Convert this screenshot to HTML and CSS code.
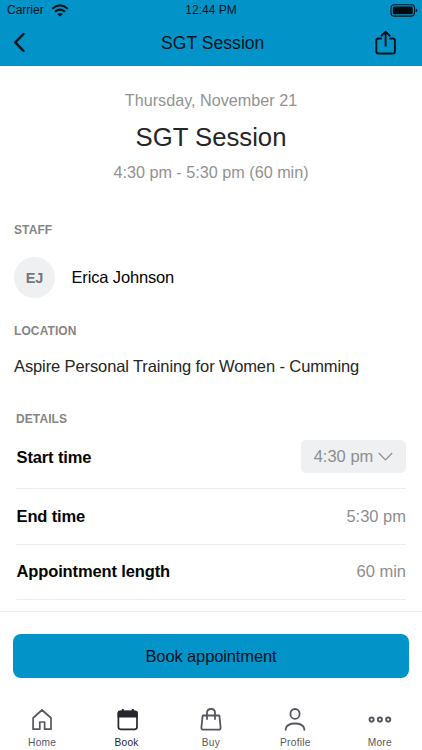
FILE: index.html
```html
<!DOCTYPE html>
<html lang="en">
<head>
<meta charset="utf-8">
<title>SGT Session</title>
<link rel="stylesheet" href="styles.css">
</head>
<body>
<div class="screen">
  <header class="header">
    <div class="status">
      <div class="carrier"><span>Carrier</span>
        <svg class="wifi" width="18" height="13" viewBox="0 0 18 13" fill="none" stroke="#00141c" stroke-width="2"><path d="M1.2 4.8Q9-2 16.8 4.8"/><path d="M4 7.8Q9 3.4 14 7.8"/><path d="M6.2 10Q9 7.8 11.8 10L9 12.6Z" fill="#00141c" stroke="none"/></svg>
      </div>
      <span class="clock">12:44 PM</span>
      <svg class="battery" width="28" height="13" viewBox="0 0 28 13"><rect x="1" y=".7" width="23.5" height="11.4" rx="3" fill="none" stroke="#00141c" stroke-width="1.1"/><rect x="2.8" y="2.5" width="19.9" height="7.8" rx="1.2" fill="#000a0f"/><path d="M25.8 4.5Q27.4 5 27.4 6.4T25.8 8.3Z" fill="#00141c"/></svg>
    </div>
    <nav class="navbar">
      <svg width="32" height="24" viewBox="0 0 32 24" fill="none" stroke="#00141c" stroke-width="2.4" stroke-linecap="round" stroke-linejoin="round"><path d="M23.5 3L15.2 11.4L23.5 19.8"/></svg>
      <span class="nav-title">SGT Session</span>
      <svg width="32" height="26" viewBox="0 0 32 26" fill="none" stroke="#00141c" stroke-width="1.9" stroke-linecap="round" stroke-linejoin="round"><path d="M11.2 8.5H8.4Q6.3 8.5 6.3 10.6V21.4Q6.3 23.5 8.4 23.5H22.8Q24.9 23.5 24.9 21.4V10.6Q24.9 8.5 22.8 8.5H20"/><path d="M15.6 15.7V2M11.5 5.7L15.6 1.7L19.7 5.7"/></svg>
    </nav>
  </header>
  <main class="content">
    <section class="summary">
      <p class="date">Thursday, November 21</p>
      <h1>SGT Session</h1>
      <p class="time">4:30 pm - 5:30 pm (60 min)</p>
    </section>
    <section class="staff">
      <h2>STAFF</h2>
      <div class="person"><span class="avatar">EJ</span><span class="name">Erica Johnson</span></div>
    </section>
    <section class="location">
      <h2>LOCATION</h2>
      <p class="place">Aspire Personal Training for Women - Cumming</p>
    </section>
    <section class="details">
      <h2>DETAILS</h2>
      <div class="row row-start"><b>Start time</b><span class="select"><span class="value">4:30 pm</span><svg width="15" height="9" viewBox="0 0 15 9" fill="none" stroke="#8d8e90" stroke-width="1.2"><path d="M.8 1L7.5 7.8L14.2 1"/></svg></span></div>
      <div class="row row-end"><b>End time</b><span class="value">5:30 pm</span></div>
      <div class="row row-length"><b>Appointment length</b><span class="value">60 min</span></div>
    </section>
  </main>
  <div class="action"><button class="book">Book appointment</button></div>
  <footer class="tabs">
    <div class="tab"><svg width="24" height="24" viewBox="0 0 24 24" fill="none" stroke="#55575f" stroke-width="1.7" stroke-linejoin="round"><path d="M3.1 10L12 2L21 10V21.2H14.6V14H9.8V21.2H3.1Z"/></svg><span>Home</span></div>
    <div class="tab active"><svg width="24" height="24" viewBox="0 0 24 24"><rect x="3.4" y="3.5" width="18.6" height="17.8" rx="2.2" fill="none" stroke="#25262e" stroke-width="1.7"/><path d="M2.6 9.4V4.8Q2.6 2.5 4.9 2.5H6.8V1H8.8V2.5H16.8V1H18.8V2.5H20.5Q22.8 2.5 22.8 4.8V9.4Z" fill="#25262e"/></svg><span>Book</span></div>
    <div class="tab"><svg width="24" height="24" viewBox="0 0 24 24" fill="none" stroke="#55575f" stroke-width="1.8" stroke-linejoin="round" stroke-linecap="round"><path d="M4.2 7.5H19.8Q20.3 7.5 20.4 8L21.6 19.3Q21.8 21.7 19.5 21.7H4.5Q2.2 21.7 2.4 19.3L3.6 8Q3.7 7.5 4.2 7.5Z"/><path d="M8 11V4.7Q8 1 12 1T16 4.7V11"/></svg><span>Buy</span></div>
    <div class="tab"><svg width="24" height="24" viewBox="0 0 24 24" fill="none" stroke="#55575f" stroke-width="1.8" stroke-linecap="round"><ellipse cx="12" cy="5.9" rx="4.6" ry="4.9"/><path d="M2.7 21.8V20.8Q4 15.5 12 15.5T21.3 20.8V21.8"/></svg><span>Profile</span></div>
    <div class="tab"><svg width="24" height="24" viewBox="0 0 24 24" fill="none" stroke="#55575f" stroke-width="1.9"><circle cx="3.6" cy="11.6" r="2.1"/><circle cx="11.9" cy="11.6" r="2.1"/><circle cx="20.2" cy="11.6" r="2.1"/></svg><span>More</span></div>
  </footer>
</div>
</body>
</html>
```
FILE: styles.css
```css
* { box-sizing: border-box; }
body { margin: 0; background: #fff; font-family: "Liberation Sans", Arial, sans-serif; color: #050505; }
h1, h2, p { margin: 0; font-weight: 400; }
.screen { width: 422px; height: 750px; display: flex; flex-direction: column; overflow: hidden; white-space: nowrap; }

.header { height: 66px; flex: none; background: #0293c9; color: #00141c; }
.status { height: 20px; display: grid; grid-template-columns: 1fr auto 1fr; align-items: center; font-size: 12px; padding: 0 4px 0 7px; }
.carrier { display: flex; align-items: center; gap: 7px; }
.battery { justify-self: end; }
.clock { margin-left: -3px; }
.navbar { height: 46px; display: flex; align-items: center; justify-content: space-between; padding: 0 20px 0 0; }
.navbar svg:first-child { margin-right: 24px; margin-left: -0.5px; }
.nav-title { font-size: 17.5px; letter-spacing: 0.05px; }

.content { height: 545px; flex: none; }
.summary { height: 145px; padding-top: 24px; text-align: center; }
.date, .time { font-size: 16.2px; line-height: 20px; color: #929292; }
h1 { font-size: 25.7px; line-height: 32px; margin: 11px 0 9px; color: #262626; }
h2 { font-size: 12px; line-height: 16px; font-weight: 700; color: #858585; letter-spacing: 0.1px; }
.staff { padding: 11px 14px 0; height: 101px; }
.person { display: flex; align-items: center; gap: 16.5px; margin-top: 19px; }
.avatar { width: 41px; height: 41px; border-radius: 50%; background: #eff0f2; display: flex; align-items: center; justify-content: center; font-size: 14.5px; font-weight: 700; color: #75777b; }
.name { font-size: 16.5px; letter-spacing: -0.15px; }
.location { padding: 11px 14px 0; height: 86px; }
.place { font-size: 16.5px; line-height: 20px; margin-top: 17px; color: #262626; letter-spacing: -0.11px; }
.details { padding: 13px 16px 0; }
.row { display: flex; align-items: center; justify-content: space-between; border-bottom: 1px solid #ececec; font-size: 16.5px; padding-left: 0.5px; height: 55px; }
.row b { letter-spacing: -0.13px; }
.row-start { height: 62px; padding-bottom: 1px; }
.row-end, .row-length { height: 55.5px; }
.value { color: #8e8e8e; }
.select { width: 105px; height: 33px; margin-bottom: 2px; padding-top: 1px; border-radius: 5px; background: #eff0f2; display: flex; align-items: center; justify-content: center; gap: 5px; }

.action { height: 76px; flex: none; border-top: 1px solid #ebebeb; padding: 22px 13px 0; background: #fff; }
.book { display: block; width: 396px; height: 44px; border: 0; border-radius: 8px; background: #0293c9; color: #00141c; font: 16.5px "Liberation Sans", Arial, sans-serif; letter-spacing: -0.12px; }
.tabs { height: 63px; flex: none; display: grid; grid-template-columns: repeat(5, 1fr); padding-top: 21px; }
.tab { display: flex; flex-direction: column; align-items: center; gap: 5px; font-size: 10.2px; line-height: 12px; letter-spacing: 0.25px; color: #55575f; }
.active { color: #25262e; }
```
